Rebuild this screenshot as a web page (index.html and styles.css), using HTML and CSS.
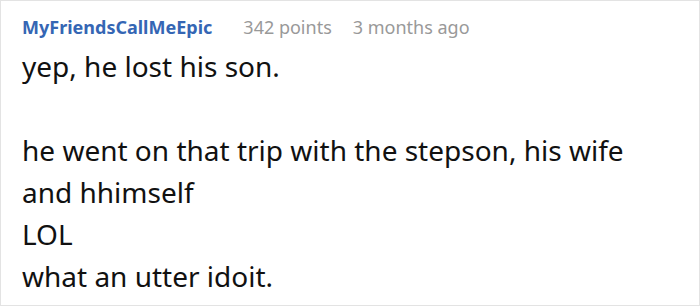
FILE: index.html
```html
<!DOCTYPE html>
<html>
<head>
<meta charset="utf-8">
<link rel="stylesheet" href="styles.css">
</head>
<body>
<div class="comment">
  <div class="meta">
    <span class="author">MyFriendsCallMeEpic</span>
    <span class="points">342 points</span>
    <span class="time">3 months ago</span>
  </div>
  <div class="text">yep, he lost his son.<br><br>he went on that trip with the stepson, his wife and hhimself<br>LOL<br>what an utter idoit.</div>
</div>
</body>
</html>
```

FILE: styles.css
```css
html, body {
  margin: 0;
  padding: 0;
  background: #fff;
}
.comment {
  box-sizing: border-box;
  width: 700px;
  height: 306px;
  border: 1px solid #e3e3e3;
  padding: 13px 21px 0 21px;
  font-family: "Noto Sans", sans-serif;
  overflow: hidden;
}
.meta {
  display: flex;
  align-items: baseline;
  font-size: 18px;
  line-height: 27px;
  margin-bottom: 4px;
}
.author {
  color: #3566b4;
  font-weight: 700;
  margin-right: 31px;
}
.points {
  color: #999;
  margin-right: 21px;
}
.time {
  color: #999;
}
.text {
  font-size: 28px;
  line-height: 42px;
  color: #111;
}
```
